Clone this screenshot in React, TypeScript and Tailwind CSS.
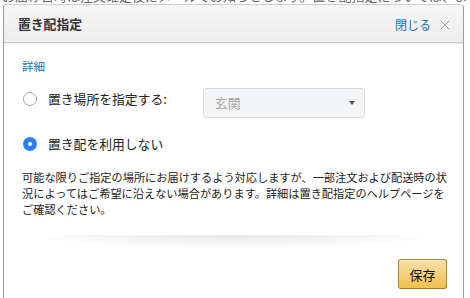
import { X } from 'lucide-react';

const jp = "font-['Noto_Sans_CJK_JP','Noto_Sans',sans-serif]";

function Radio({ checked }: { checked?: boolean }) {
  return checked ? (
    <span className="flex h-[14px] w-[14px] shrink-0 items-center justify-center rounded-full bg-[#2d7ff3]">
      <span className="h-[4px] w-[4px] rounded-full bg-white" />
    </span>
  ) : (
    <span className="h-[14px] w-[14px] shrink-0 rounded-full border border-[#a6a6a6] bg-white" />
  );
}

export default function App() {
  return (
    <div className={`h-[298px] w-[470px] overflow-hidden bg-white ${jp}`}>
      {/* page behind the popover */}
      <div className="h-[4px] overflow-hidden px-[2px]">
        <div className="-mt-[11px] whitespace-nowrap text-[13px] leading-[14px] text-[#666]">
          お届け日時は注文確定後にメールでお知らせします。置き配指定については、よくある質問の置き配
        </div>
      </div>

      {/* popover */}
      <div className="ml-[3px] h-[400px] w-[461px] rounded-t-[4px] border border-[#9a9a9a] border-t-[#cfcfcf] bg-white">
        <div className="flex h-[38px] items-center justify-between rounded-t-[4px] border-b border-[#c9c9c9] bg-gradient-to-b from-[#f7f7f7] to-[#ececec] pl-[14px] pr-[10px] shadow-[0_1px_0_#eeeeee]">
          <h4 className="pt-[2px] text-[12.8px] font-bold leading-none text-[#333]">置き配指定</h4>
          <div className="flex items-center gap-[6px] pt-[2px]">
            <span className="text-[12px] leading-none text-[#1a73b8]">閉じる</span>
            <X size={16} strokeWidth={1.2} className="text-[#8a8a8a]" />
          </div>
        </div>

        <div className="px-[18px] pt-[16px]">
          <div className="text-[11.5px] leading-[14px] text-[#1a73b8]">詳細</div>

          <div className="mt-[15px] flex items-start">
            <div className="mt-[3px] flex w-[181px] items-center gap-[11px] pl-[1px]">
              <Radio />
              <span className="text-[12.8px] leading-[16px] text-[#222]">置き場所を指定する:</span>
            </div>
            <div className="flex h-[30px] w-[162px] items-center justify-between rounded-[3px] border border-[#dadada] bg-[#f4f5f7] pl-[11px] pr-[9px]">
              <span className="text-[12.8px] leading-none text-[#a5a5a5]">玄関</span>
              <span className="h-0 w-0 border-x-[3.5px] border-t-[4px] border-x-transparent border-t-[#555]" />
            </div>
          </div>

          <div className="mt-[18px] flex items-center gap-[11px] pl-[1px]">
            <Radio checked />
            <span className="text-[12.8px] leading-[16px] text-[#222]">置き配を利用しない</span>
          </div>

          <p className="-mr-[10px] mt-[17px] break-all text-[11.2px] leading-[16px] text-[#222]">
            可能な限りご指定の場所にお届けするよう対応しますが、一部注文および配送時の状況によってはご希望に沿えない場合があります。詳細は置き配指定のヘルプページをご確認ください。
          </p>
        </div>

        <div className="mx-[20px] mt-[18px] h-[14px] bg-[radial-gradient(ellipse_at_top,#e6e6e6,rgba(255,255,255,0)_70%)]" />

        <div className="flex justify-end pr-[16px] pt-[10px]">
          <button className="flex h-[30px] w-[49px] items-center justify-center rounded-[3px] border border-[#a88734] border-b-[#9c7e31] bg-gradient-to-b from-[#f7dfa5] to-[#f0c14b] text-[13px] leading-none text-[#111] shadow-[inset_0_1px_0_rgba(255,255,255,0.4)]">
            保存
          </button>
        </div>
      </div>
    </div>
  );
}
